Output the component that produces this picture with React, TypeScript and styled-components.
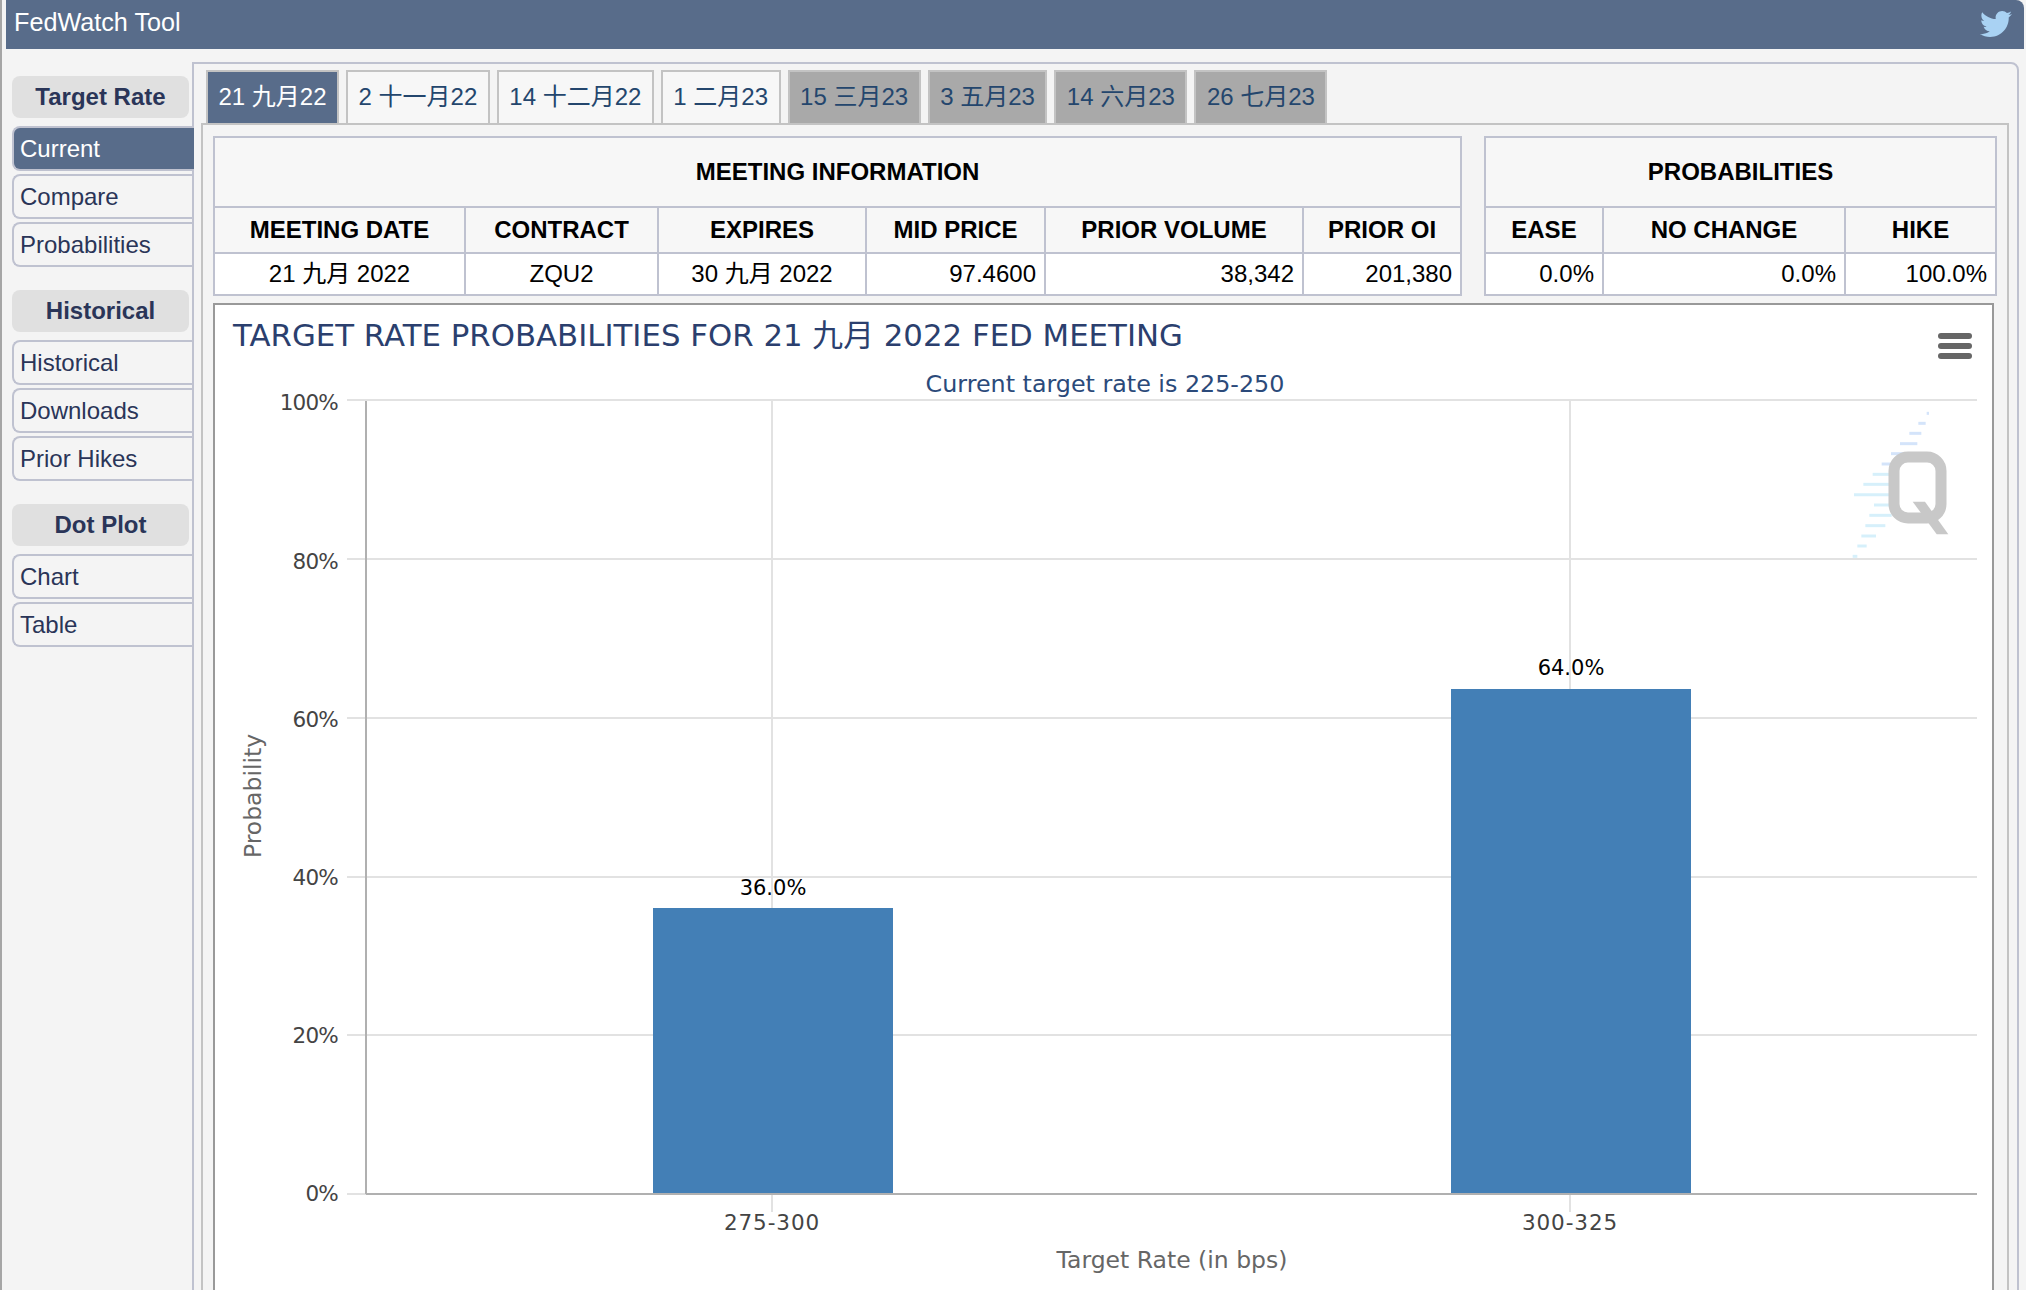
import React from 'react';
import styled, { createGlobalStyle } from 'styled-components';
import { FaTwitter } from 'react-icons/fa';

const SANS = `"Liberation Sans", "Noto Sans CJK SC", Arial, sans-serif`;
const CHART = `"DejaVu Sans", "Noto Sans CJK SC", sans-serif`;

const Global = createGlobalStyle`
  html, body { margin: 0; padding: 0; background: #f3f3f3; }
  #root { width: 2026px; height: 1290px; overflow: hidden; }
`;

const Page = styled.div`
  box-sizing: border-box;
  width: 2026px;
  height: 1290px;
  overflow: hidden;
  background: #f4f4f4;
  border-left: 2px solid #a6a6a6;
  font-family: ${SANS};
`;
const TopBar = styled.header`
  box-sizing: border-box;
  height: 49px;
  margin: 0 2px 0 4px;
  padding: 0 12px 4px 8px;
  background: #586c8a;
  border-top-right-radius: 8px;
  color: #fff;
  font-size: 25.2px;
  display: flex;
  align-items: center;
  justify-content: space-between;
`;
const TwitterLink = styled.span`
  display: flex;
  color: #a9d2f3;
  font-size: 32px;
  margin-top: 3px;
`;
const Body = styled.div`
  display: flex;
  align-items: flex-start;
`;
const Sidebar = styled.nav`
  box-sizing: border-box;
  width: 190px;
  flex: none;
  padding: 27px 0 0 10px;
  display: flex;
  flex-direction: column;
`;
const Group = styled.div`
  display: flex;
  flex-direction: column;
  gap: 3px;
  margin-bottom: 23px;
`;
const GroupTitle = styled.div`
  width: 177px;
  height: 42px;
  margin-bottom: 5px;
  background: #e0e0e0;
  border-radius: 8px;
  color: #2a3558;
  font-weight: 700;
  font-size: 24px;
  line-height: 42px;
  text-align: center;
`;
const NavItem = styled.div<{ $active?: boolean }>`
  box-sizing: border-box;
  height: 45px;
  width: ${p => (p.$active ? '182px' : '180px')};
  position: relative;
  z-index: ${p => (p.$active ? 2 : 0)};
  padding-left: 6px;
  border: 2px solid #bfc2d0;
  border-right: 0;
  border-radius: 8px 0 0 8px;
  background: ${p => (p.$active ? '#586c8a' : '#f4f4f4')};
  color: ${p => (p.$active ? '#fff' : '#2a3558')};
  font-size: 24px;
  line-height: 41px;
`;
const Main = styled.main`
  box-sizing: border-box;
  width: 1827px;
  height: 1400px;
  margin-top: 13px;
  padding: 6px 8px 0 7px;
  border: 2px solid #bfc2d0;
  border-radius: 0 8px 0 0;
`;
const TabStrip = styled.div`
  display: flex;
  gap: 7px;
  padding-left: 5px;
  height: 53px;
`;
const Tab = styled.div<{ $kind: 'active' | 'idle' | 'off' }>`
  box-sizing: border-box;
  height: 53px;
  padding: 0 10.5px;
  border: 2px solid #c3c3c3;
  border-bottom: 0;
  background: ${p => (p.$kind === 'active' ? '#586c8a' : p.$kind === 'off' ? '#a9a9a9' : '#f7f7f7')};
  color: ${p => (p.$kind === 'active' ? '#fff' : '#24466d')};
  font-size: 24px;
  line-height: 50px;
  white-space: nowrap;
`;
const TabPanel = styled.div`
  box-sizing: border-box;
  height: 1300px;
  padding: 11px 10px 0 10px;
  border: 2px solid #c3c3c3;
  background: #f4f4f4;
`;
const TableRow = styled.div`
  display: flex;
  justify-content: space-between;
`;
const InfoTable = styled.table<{ $w: number }>`
  width: ${p => p.$w}px;
  table-layout: fixed;
  border-collapse: collapse;
  border: 2px solid #bfc2d0;
  font-size: 24px;
  line-height: 26px;
  color: #000;
`;
const Col = styled.col<{ $w: number }>`
  width: ${p => p.$w}px;
`;
const Cell = styled.td<{ $right?: boolean }>`
  box-sizing: border-box;
  height: 42px;
  padding: 0 8px;
  border: 2px solid #bfc2d0;
  background: #fff;
  text-align: ${p => (p.$right ? 'right' : 'center')};
  white-space: nowrap;
`;
const HeadCell = styled.th`
  box-sizing: border-box;
  height: 46px;
  padding: 0;
  border: 2px solid #bfc2d0;
  background: #f7f7f7;
  font-weight: 700;
  white-space: nowrap;
`;
const TitleCell = styled(HeadCell)`
  height: 70px;
`;
const ChartCard = styled.section`
  box-sizing: border-box;
  width: 1781px;
  height: 1000px;
  margin-top: 7px;
  border: 2px solid #999;
  border-bottom: 0;
  background: #fff;
`;
const ChartHead = styled.div`
  box-sizing: border-box;
  height: 67px;
  padding: 0 20px 0 18px;
  display: flex;
  align-items: flex-start;
  justify-content: space-between;
`;
const ChartTitle = styled.h2`
  margin: 8px 0 0;
  font-family: ${CHART};
  font-size: 30.8px;
  line-height: 44px;
  font-weight: 400;
  color: #2b3f6e;
  white-space: nowrap;
`;
const MenuButton = styled.div`
  margin-top: 28px;
  width: 34px;
  display: flex;
  flex-direction: column;
  gap: 4px;
`;
const MenuBar = styled.span`
  height: 6px;
  border-radius: 3px;
  background: #666;
`;
const ChartSvg = styled.svg`
  display: block;
  font-family: ${CHART};
`;

const row1 = [251, 193, 208, 179, 258, 158];
const row2 = [118, 242, 151];
const tabs: [string, 'active' | 'idle' | 'off'][] = [
  ['21 九月22', 'active'],
  ['2 十一月22', 'idle'],
  ['14 十二月22', 'idle'],
  ['1 二月23', 'idle'],
  ['15 三月23', 'off'],
  ['3 五月23', 'off'],
  ['14 六月23', 'off'],
  ['26 七月23', 'off'],
];
const nav: [string, string[]][] = [
  ['Target Rate', ['Current', 'Compare', 'Probabilities']],
  ['Historical', ['Historical', 'Downloads', 'Prior Hikes']],
  ['Dot Plot', ['Chart', 'Table']],
];
const ticks: [string, number, number][] = [
  ['100%', 400, 410], ['80%', 559, 569], ['60%', 718, 727], ['40%', 877, 885], ['20%', 1035, 1043], ['0%', 1194, 1201],
];
const dashes: [number, number, number][] = [
  [440, 447, 340], [415, 437, 370], [388, 424, 400], [360, 412, 431], [333, 370, 461],
  [305, 332, 492], [278, 328, 523], [250, 328, 553], [222, 328, 584], [282, 328, 615],
  [268, 335, 646], [256, 316, 677], [244, 288, 708], [232, 260, 738], [218, 232, 769],
];

function Chart() {
  return (
    <ChartSvg width={1777} height={918} viewBox="215 372 1777 918">
      {dashes.map(([a, b, y], i) => (
        <line key={i} x1={1780 + a / 3} x2={1780 + b / 3} y1={300 + y / 3} y2={300 + y / 3}
          stroke={i < 6 ? '#d4e4fa' : '#d6f0fb'} strokeWidth={3} />
      ))}
      <rect x={1894} y={457} width={47} height={61} rx={14} fill="none" stroke="#c8c8c8" strokeWidth={11} />
      <polygon points="1912.7,501.7 1925,501.7 1948.3,534.3 1936.7,534.3" fill="#c8c8c8" />
      {ticks.map(([t, y]) => (
        <line key={t} x1={347} x2={1977} y1={y} y2={y} stroke="#e2e2e2" strokeWidth={2} />
      ))}
      {[772, 1570].map(x => (
        <line key={x} x1={x} x2={x} y1={400} y2={1212} stroke="#e2e2e2" strokeWidth={2} />
      ))}
      <line x1={366} x2={366} y1={401} y2={1194} stroke="#b0b0b0" strokeWidth={2} />
      <rect x={653} y={908} width={240} height={286} fill="#437fb6" />
      <rect x={1451} y={689} width={240} height={505} fill="#437fb6" />
      <line x1={366} x2={1977} y1={1194} y2={1194} stroke="#b0b0b0" strokeWidth={2} />
      {ticks.map(([t, , ly]) => (
        <text key={t} x={338} y={ly} textAnchor="end" fontSize={21.5} letterSpacing={-0.8} fill="#444">{t}</text>
      ))}
      <text x={1105} y={392} textAnchor="middle" fontSize={23.8} fill="#2b4a7a">Current target rate is 225-250</text>
      <text x={773} y={895} textAnchor="middle" fontSize={21} fill="#000">36.0%</text>
      <text x={1571} y={675} textAnchor="middle" fontSize={21} fill="#000">64.0%</text>
      <text x={772} y={1230} textAnchor="middle" fontSize={21.5} letterSpacing={0.9} fill="#444">275-300</text>
      <text x={1570} y={1230} textAnchor="middle" fontSize={21.5} letterSpacing={0.9} fill="#444">300-325</text>
      <text x={1172} y={1268} textAnchor="middle" fontSize={23.5} fill="#666">Target Rate (in bps)</text>
      <text transform="translate(261 796) rotate(-90)" textAnchor="middle" fontSize={23.5} fill="#666">Probability</text>
    </ChartSvg>
  );
}

export default function App() {
  return (
    <Page>
      <Global />
      <TopBar>
        FedWatch Tool
        <TwitterLink><FaTwitter /></TwitterLink>
      </TopBar>
      <Body>
        <Sidebar>
          {nav.map(([title, items]) => (
            <Group key={title}>
              <GroupTitle>{title}</GroupTitle>
              {items.map(it => (
                <NavItem key={it} $active={it === 'Current'}>{it}</NavItem>
              ))}
            </Group>
          ))}
        </Sidebar>
        <Main>
          <TabStrip>
            {tabs.map(([t, k]) => <Tab key={t} $kind={k}>{t}</Tab>)}
          </TabStrip>
          <TabPanel>
            <TableRow>
              <InfoTable $w={1248}>
                <colgroup>{row1.map((w, i) => <Col key={i} $w={w} />)}</colgroup>
                <thead>
                  <tr><TitleCell colSpan={6}>MEETING INFORMATION</TitleCell></tr>
                  <tr>
                    {['MEETING DATE', 'CONTRACT', 'EXPIRES', 'MID PRICE', 'PRIOR VOLUME', 'PRIOR OI'].map(h => (
                      <HeadCell key={h}>{h}</HeadCell>
                    ))}
                  </tr>
                </thead>
                <tbody>
                  <tr>
                    <Cell>21 九月 2022</Cell>
                    <Cell>ZQU2</Cell>
                    <Cell>30 九月 2022</Cell>
                    <Cell $right>97.4600</Cell>
                    <Cell $right>38,342</Cell>
                    <Cell $right>201,380</Cell>
                  </tr>
                </tbody>
              </InfoTable>
              <InfoTable $w={511}>
                <colgroup>{row2.map((w, i) => <Col key={i} $w={w} />)}</colgroup>
                <thead>
                  <tr><TitleCell colSpan={3}>PROBABILITIES</TitleCell></tr>
                  <tr>
                    {['EASE', 'NO CHANGE', 'HIKE'].map(h => <HeadCell key={h}>{h}</HeadCell>)}
                  </tr>
                </thead>
                <tbody>
                  <tr>
                    <Cell $right>0.0%</Cell>
                    <Cell $right>0.0%</Cell>
                    <Cell $right>100.0%</Cell>
                  </tr>
                </tbody>
              </InfoTable>
            </TableRow>
            <ChartCard>
              <ChartHead>
                <ChartTitle>TARGET RATE PROBABILITIES FOR 21 九月 2022 FED MEETING</ChartTitle>
                <MenuButton><MenuBar /><MenuBar /><MenuBar /></MenuButton>
              </ChartHead>
              <Chart />
            </ChartCard>
          </TabPanel>
        </Main>
      </Body>
    </Page>
  );
}
